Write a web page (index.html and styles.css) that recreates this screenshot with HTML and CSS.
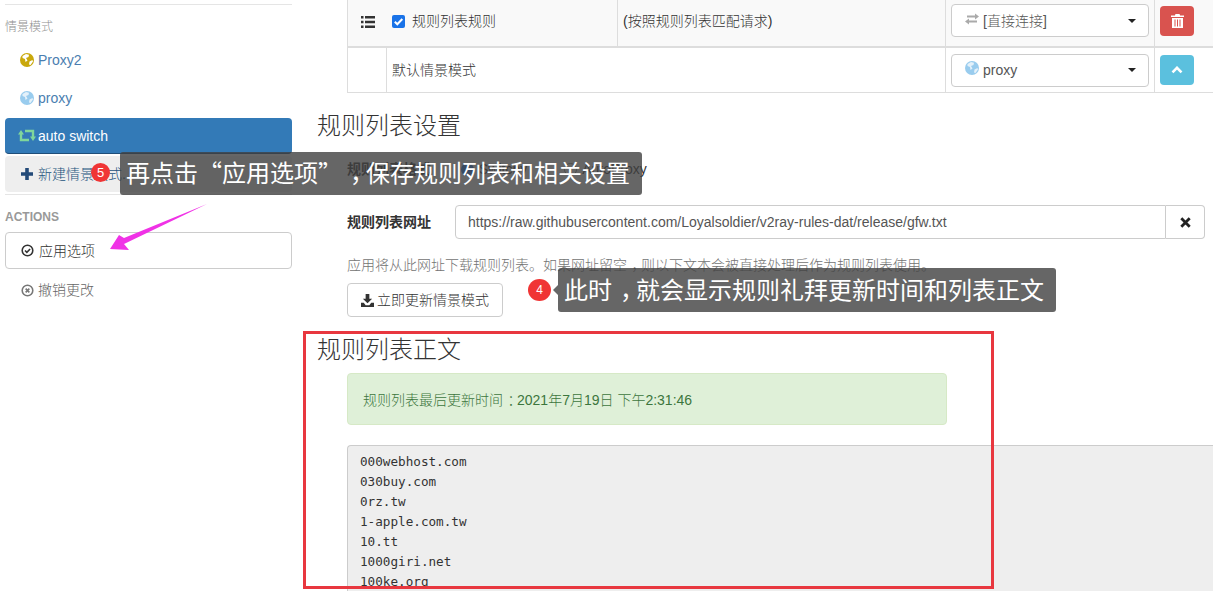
FILE: index.html
```html
<!DOCTYPE html>
<html lang="zh">
<head>
<meta charset="utf-8">
<title>SwitchyOmega</title>
<link rel="stylesheet" href="styles.css">
</head>
<body>
<div class="page">
  <aside class="side">
    <div class="rule first"></div>
    <div class="side-head cn">情景模式</div>
    <div class="nav">
      <svg class="ic" viewBox="0 0 14 14"><circle cx="7" cy="7" r="7" fill="#c9a80c"/><path d="M2.500 3l3.500-2 3 .8-.5 2.200-2.500 1 1.500 2.500-2 1.500-.5-3-2.500-1zM9.500 8.500l3-1.500.5 1.500-2.500 3.500-1.500-.5z" fill="#fff"/></svg>
      <span>Proxy2</span>
    </div>
    <div class="nav">
      <svg class="ic" viewBox="0 0 14 14"><circle cx="7" cy="7" r="7" fill="#99ccee"/><path d="M2.500 3l3.500-2 3 .8-.5 2.200-2.500 1 1.500 2.500-2 1.500-.5-3-2.500-1zM9.500 8.500l3-1.500.5 1.500-2.500 3.500-1.500-.5z" fill="#e4f1fa"/></svg>
      <span>proxy</span>
    </div>
    <div class="nav active">
      <svg class="ic wide" viewBox="0 0 18 13"><path d="M3 4v7h8M15 9V2H7" fill="none" stroke="#7fd69b" stroke-width="2.400"/><path d="M0 5.500L3 1l3 4.500zM12 7.500l3 4.500 3-4.500z" fill="#7fd69b"/></svg>
      <span>auto switch</span>
    </div>
    <div class="nav add">
      <svg class="ic plus" viewBox="0 0 14 14"><path d="M5.200 1h3.600v4.200H13v3.600H8.800V13H5.200V8.800H1V5.200h4.200z" fill="#234a78"/></svg>
      <span class="cn">新建情景模式...</span>
    </div>
    <div class="rule"></div>
    <div class="side-head actions">ACTIONS</div>
    <div class="btn-apply">
      <svg class="ic small" viewBox="0 0 14 14"><circle cx="7" cy="7" r="5.700" fill="none" stroke="#333" stroke-width="1.700"/><path d="M4.300 7l2 2 3.500-3.700" fill="none" stroke="#333" stroke-width="1.700"/></svg>
      <span class="cn">应用选项</span>
    </div>
    <div class="btn-undo">
      <svg class="ic small" viewBox="0 0 14 14"><circle cx="7" cy="7" r="5.700" fill="none" stroke="#777" stroke-width="1.700"/><path d="M5 5l4 4M9 5l-4 4" fill="none" stroke="#777" stroke-width="1.700"/></svg>
      <span class="cn">撤销更改</span>
    </div>
  </aside>

  <main class="main">
    <div class="tbl">
      <div class="row row-a">
        <div class="cell grip">
          <svg width="14" height="12" viewBox="0 0 14 12"><path d="M0 0h2.500v2.500H0zM4 0h10v2.500H4zM0 4.700h2.500v2.500H0zM4 4.700h10v2.500H4zM0 9.400h2.500V12H0zM4 9.400h10V12H4z" fill="#333"/></svg>
        </div>
        <div class="cell chk">
          <svg class="box" viewBox="0 0 13 13"><rect width="13" height="13" rx="2" fill="#1a73e8"/><path d="M2.800 6.800l2.500 2.500 5-5.300" fill="none" stroke="#fff" stroke-width="2"/></svg>
          <span class="cn">规则列表规则</span>
        </div>
        <div class="cell cond cn">(按照规则列表匹配请求)</div>
        <div class="cell pick">
          <div class="select">
            <svg class="ic sel-ic" viewBox="0 0 14 14"><path d="M2 3.500h8V1.500L14 4.500l-4 3V5.500H2zM12 8.500H4v-2L0 9.500l4 3v-2h8z" fill="#aaa"/></svg>
            <span class="cn">[直接连接]</span>
            <i class="caret"></i>
          </div>
        </div>
        <div class="cell act">
          <div class="sq red">
            <svg width="13" height="14" viewBox="0 0 13 14"><path d="M4.500 0h4l.6 1.500H13V3H0V1.500h3.900zM1 4h11v10H1zM3.500 5.500v7h1v-7zM6 5.500v7h1v-7zM8.500 5.500v7h1v-7z" fill="#fff" fill-rule="evenodd"/></svg>
          </div>
        </div>
      </div>
      <div class="row row-b">
        <div class="cell blank"></div>
        <div class="cell dflt cn">默认情景模式</div>
        <div class="cell pick">
          <div class="select">
            <svg class="ic sel-ic" viewBox="0 0 14 14"><circle cx="7" cy="7" r="7" fill="#99ccee"/><path d="M2.500 3l3.500-2 3 .8-.5 2.200-2.500 1 1.500 2.500-2 1.500-.5-3-2.500-1zM9.500 8.500l3-1.500.5 1.500-2.500 3.500-1.500-.5z" fill="#e4f1fa"/></svg>
            <span>proxy</span>
            <i class="caret"></i>
          </div>
        </div>
        <div class="cell act">
          <div class="sq blue">
            <svg width="12" height="8" viewBox="0 0 12 8"><path d="M1.500 6.300L6 1.800l4.500 4.500" fill="none" stroke="#fff" stroke-width="2.600"/></svg>
          </div>
        </div>
      </div>
    </div>

    <h3 class="title title-a cn">规则列表设置</h3>
    <div class="form">
      <div class="fmt">
        <b class="cn lbl">规则列表格式</b>
        <i class="radio"></i><span class="opt">Switchy</span>
        <i class="radio off"></i><span class="opt">AutoProxy</span>
      </div>
      <div class="url">
        <b class="cn lbl">规则列表网址</b>
        <div class="url-group">
          <div class="input">https://raw.githubusercontent.com/Loyalsoldier/v2ray-rules-dat/release/gfw.txt</div>
          <div class="addon"><svg width="11" height="11" viewBox="0 0 11 11"><path d="M1.300 1.300l8.400 8.400M9.700 1.300l-8.400 8.400" stroke="#222" stroke-width="2.800"/></svg></div>
        </div>
      </div>
      <p class="help cn">应用将从此网址下载规则列表。如果网址留空<span class="mark">，</span>则以下文本会被直接处理后作为规则列表使用。</p>
      <div class="btn-update">
        <svg class="ic small" viewBox="0 0 14 14"><path d="M5 0h4v5h3L7 10 2 5h3zM0 9.500h3L5 12h4l2-2.500h3V14H0z" fill="#333"/></svg>
        <span class="cn">立即更新情景模式</span>
      </div>
    </div>

    <h3 class="title title-b cn">规则列表正文</h3>
    <div class="form">
      <div class="alert cn">规则列表最后更新时间<span class="mark">：</span>2021年7月19日 下午2:31:46</div>
      <pre class="code">000webhost.com
030buy.com
0rz.tw
1-apple.com.tw
10.tt
1000giri.net
100ke.org</pre>
    </div>
  </main>
</div>

<div class="frame"></div>
<svg class="arrow" viewBox="0 0 110 60" width="110" height="60"><path d="M104 1L21 35 16 32 7 46 26 47 21 41z" fill="#f032e6"/></svg>
<div class="dot dot5">5</div>
<div class="tip tip5">再点击“应用选项”<span class="mark">，</span>保存规则列表和相关设置</div>
<div class="dot dot4">4</div>
<div class="tip tip4">此时<span class="mark">，</span>就会显示规则礼拜更新时间和列表正文</div>
</body>
</html>
```
FILE: styles.css
```css
* { box-sizing: border-box; }
html, body { margin: 0; height: 591px; overflow: hidden; background: #fff; }
body { font: 14px/20px "Liberation Sans", "Noto Sans CJK SC", sans-serif; color: #333; position: relative; text-spacing-trim: space-all; font-feature-settings: "chws" 0, "palt" 0; }
.cn { font-family: "Liberation Sans", "Noto Sans CJK SC", sans-serif; font-weight: 300; }
.mark { display: inline-block; width: 1em; text-indent: .33em; font-family: "Noto Sans CJK SC", sans-serif; }
.page { display: flex; height: 591px; }

.side { width: 317px; flex: none; padding: 4px 25px 0 5px; }
.rule { height: 1px; background: #e5e5e5; }
.side-head { font-size: 12px; color: #8f8f8f; line-height: 17px; }
.first + .side-head { margin: 14px 0 5px; }
.actions { margin: 14px 0 6px; font-weight: 700; color: #999; }
.nav { height: 38px; display: flex; align-items: center; padding-left: 15px; color: #4a7eb0; border-radius: 4px; gap: 4px; }
.active { height: 36px; margin-top: 1px; background: #337ab7; color: #fff; padding-left: 13px; gap: 2px; border-bottom: 1px solid #1f4e79; }
.add { height: 36px; margin: 2px 0; background: #eee; color: #23527c; gap: 4px; }
.ic { width: 14px; height: 14px; flex: none; }
.ic.wide { width: 18px; height: 13px; }
.ic.small { width: 13px; height: 13px; }
.btn-apply { height: 37px; border: 1px solid #ccc; border-radius: 4px; display: flex; align-items: center; gap: 5px; padding-left: 15px; color: #333; }
.btn-undo { height: 42px; display: flex; align-items: center; gap: 4px; padding-left: 16px; color: #666; }

.main { flex: 1; min-width: 0; }
.tbl { margin-left: 30px; }
.row { display: grid; }
.row-a { height: 48px; background: #f9f9f9; border-bottom: 2px solid #ddd; grid-template-columns: 40px 230px 328px 209px 1fr; }
.row-b { height: 45px; border-bottom: 1px solid #ddd; grid-template-columns: 39px 559px 209px 1fr; }
.cell { display: flex; align-items: center; border-left: 1px solid #ddd; }
.grip + .chk { border-left: 0; gap: 7px; padding-left: 5px; }
.grip { padding-left: 13px; padding-bottom: 3px; }
.box { width: 13px; height: 13px; flex: none; }
.chk, .cond { padding-bottom: 4px; }
.cond { padding-left: 5px; }
.dflt { padding-left: 5px; padding-bottom: 1px; }
.pick { padding: 0 5px; }
.row-a .pick { padding-bottom: 5px; }
.row-a .act { padding-bottom: 4px; }
.select { flex: 1; height: 33px; background: #fff; border: 1px solid #ccc; border-radius: 4px; display: flex; align-items: center; padding: 0 12px 0 13px; gap: 4px; color: #555; }
.sel-ic { margin-top: -4px; }
.caret { margin-left: auto; border-top: 4px solid #222; border-left: 4px solid transparent; border-right: 4px solid transparent; }
.act { padding-left: 5px; }
.sq { width: 34px; height: 30px; border-radius: 4px; display: flex; align-items: center; justify-content: center; }
.red { background: #d9534f; }
.blue { background: #5bc0de; }

.title { margin: 0; font-size: 24px; line-height: 30px; font-weight: 300; color: #333; }
.title-a { margin-top: 18px; }
.title-b { margin-top: 18px; }
.form { margin-left: 30px; }
.fmt { display: flex; align-items: center; height: 24px; margin-top: 16px; }
.lbl { font-weight: 700; width: 108px; flex: none; font-size: 14px; }
.radio { width: 13px; height: 13px; border-radius: 50%; background: #1a73e8; margin: 0 5px 0 6px; flex: none; }
.radio.off { background: #fff; border: 1px solid #777; margin-left: 37px; }
.url { display: flex; align-items: center; margin-top: 24px; }
.url-group { flex: 1; display: flex; height: 34px; margin-right: 8px; }
.input { flex: 1; border: 1px solid #ccc; border-radius: 4px 0 0 4px; padding: 6px 12px; color: #555; font-size: 14px; white-space: nowrap; overflow: hidden; }
.addon { width: 39px; border: 1px solid #ccc; border-left: 0; border-radius: 0 4px 4px 0; display: flex; align-items: center; justify-content: center; }
.help { margin: 15px 0 8px; color: #737373; font-size: 14px; line-height: 20px; white-space: nowrap; }
.btn-update { width: 156px; height: 34px; border: 1px solid #ccc; border-radius: 4px; display: flex; align-items: center; justify-content: center; gap: 3px; }
.alert { width: 600px; height: 52px; margin-top: 8px; background: #dff0d8; border: 1px solid #d6e9c6; border-radius: 4px; color: #3c763d; padding: 15px; font-size: 14px; line-height: 20px; }
.code { margin: 20px 0 0; height: 146px; padding: 6px 12px; background: #eee; border: 1px solid #ccc; border-right: 0; border-bottom: 0; border-radius: 4px 0 0 0; font: 12.65px/20px "DejaVu Sans Mono", monospace; color: #333; overflow: hidden; }

.frame { position: absolute; left: 303px; top: 331px; width: 691px; height: 258px; border: 3px solid #e8373f; }
.arrow { position: absolute; left: 103px; top: 203px; }
.tip { position: absolute; background: rgba(64,64,64,.8); color: #fff; font: 400 24px/39px "Noto Sans CJK SC", sans-serif; border-radius: 3px; white-space: nowrap; }
.tip5 { left: 120px; top: 152px; width: 522px; height: 43px; padding-left: 6px; }
.tip4 { left: 558px; top: 268px; width: 498px; height: 44px; padding-left: 6px; line-height: 41px; }
.tip4::before { content: ""; position: absolute; left: -5px; top: 17px; border-right: 5px solid #666; border-top: 5px solid transparent; border-bottom: 5px solid transparent; }
.dot { position: absolute; background: #f03535; color: #fff; border-radius: 50%; display: flex; align-items: center; justify-content: center; }
.dot5 { left: 91px; top: 163px; width: 19px; height: 19px; font-size: 13px; }
.dot4 { left: 528px; top: 279px; width: 23px; height: 22px; font-size: 12px; }
```
